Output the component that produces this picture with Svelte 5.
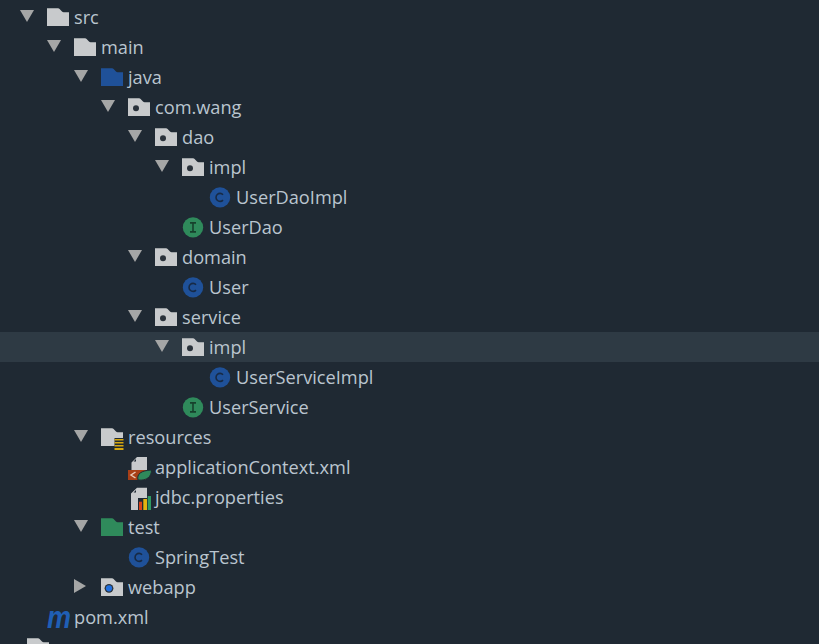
<script lang="ts">
  type Row = { name: string; depth: number; icon: string; arrow?: string; active?: boolean };

  const rows: Row[] = [
    { name: 'src', depth: 1, icon: 'folder', arrow: 'open' },
    { name: 'main', depth: 2, icon: 'folder', arrow: 'open' },
    { name: 'java', depth: 3, icon: 'source', arrow: 'open' },
    { name: 'com.wang', depth: 4, icon: 'package', arrow: 'open' },
    { name: 'dao', depth: 5, icon: 'package', arrow: 'open' },
    { name: 'impl', depth: 6, icon: 'package', arrow: 'open' },
    { name: 'UserDaoImpl', depth: 7, icon: 'class' },
    { name: 'UserDao', depth: 6, icon: 'interface' },
    { name: 'domain', depth: 5, icon: 'package', arrow: 'open' },
    { name: 'User', depth: 6, icon: 'class' },
    { name: 'service', depth: 5, icon: 'package', arrow: 'open' },
    { name: 'impl', depth: 6, icon: 'package', arrow: 'open', active: true },
    { name: 'UserServiceImpl', depth: 7, icon: 'class' },
    { name: 'UserService', depth: 6, icon: 'interface' },
    { name: 'resources', depth: 3, icon: 'resources', arrow: 'open' },
    { name: 'applicationContext.xml', depth: 4, icon: 'spring' },
    { name: 'jdbc.properties', depth: 4, icon: 'props' },
    { name: 'test', depth: 3, icon: 'test', arrow: 'open' },
    { name: 'SpringTest', depth: 4, icon: 'class' },
    { name: 'webapp', depth: 3, icon: 'web', arrow: 'closed' },
    { name: 'pom.xml', depth: 1, icon: 'maven' },
    { name: '', depth: 0, icon: 'folder' }
  ];

  const folderPath = 'M0 2.3H11Q12 2.3 12.6 3L15 5.6Q15.6 6.3 16.6 6.3H22V20H0Z';
</script>

<div class="tree">
  {#each rows as row}
    <div class="row" class:active={row.active} style="padding-left: {20 + row.depth * 27 - 27}px">
      <span class="arrow">
        {#if row.arrow === 'open'}
          <svg width="14" height="12" viewBox="0 0 14 12"><path d="M0 0H14L7 12Z" fill="#a5a6a6" /></svg>
        {:else if row.arrow === 'closed'}
          <svg width="12" height="14" viewBox="0 0 12 14"><path d="M0 0L12 7L0 14Z" fill="#a5a6a6" /></svg>
        {/if}
      </span>
      <span class="icon">
        {#if row.icon === 'folder'}
          <svg width="22" height="22" viewBox="0 0 22 22"><path d={folderPath} fill="#c8cacc" /></svg>
        {:else if row.icon === 'source'}
          <svg width="22" height="22" viewBox="0 0 22 22"><path d={folderPath} fill="#1f5199" /></svg>
        {:else if row.icon === 'test'}
          <svg width="22" height="22" viewBox="0 0 22 22"><path d={folderPath} fill="#2f8a5b" /></svg>
        {:else if row.icon === 'package'}
          <svg width="22" height="22" viewBox="0 0 22 22">
            <path d={folderPath} fill="#c8cacc" />
            <circle cx="8" cy="12.3" r="3" fill="#2a323b" />
          </svg>
        {:else if row.icon === 'web'}
          <svg width="22" height="22" viewBox="0 0 22 22">
            <path d={folderPath} fill="#c8cacc" />
            <circle cx="8" cy="12.3" r="4.4" fill="#2a323b" />
            <circle cx="8" cy="12.3" r="3.1" fill="#1f6fe0" />
          </svg>
        {:else if row.icon === 'resources'}
          <svg width="23" height="25" viewBox="0 0 23 25">
            <path d="M0 2.3H11Q12 2.3 12.6 3L15 5.6Q15.6 6.3 16.6 6.3H22V12H13.5V20H0Z" fill="#c8cacc" />
            <path d="M13.5 13H22.5V14.6H13.5ZM13.5 16H22.5V17.6H13.5ZM13.5 19H22.5V20.6H13.5ZM13.5 22H22.5V24H13.5Z" fill="#d6a70f" />
          </svg>
        {:else if row.icon === 'class'}
          <svg width="22" height="22" viewBox="0 0 22 22">
            <circle cx="11" cy="11.4" r="10.2" fill="#1f5199" />
            <path d="M14 8.7A4 4 0 1 0 14 14.1" fill="none" stroke="#172a45" stroke-width="1.6" />
          </svg>
        {:else if row.icon === 'interface'}
          <svg width="22" height="22" viewBox="0 0 22 22">
            <circle cx="11" cy="11.4" r="10.2" fill="#2f8a5b" />
            <path d="M8 6.9H14M8 15.9H14M11 6.9V15.9" fill="none" stroke="#17402c" stroke-width="1.6" />
          </svg>
        {:else if row.icon === 'spring'}
          <svg width="24" height="25" viewBox="0 0 24 25">
            <path d="M9 1H19V14H3.5V6.5ZM8 3L5.5 5.5H8Z" fill="#c8cacc" fill-rule="evenodd" />
            <path d="M0 14H18V24H0Z" fill="#a83f17" />
            <path d="M7.5 16L3 19L7.5 22" fill="none" stroke="#e8c8b8" stroke-width="1.5" />
            <path d="M10 24C8.5 18 13 14.5 23.5 14C23.5 20.5 19 25 10 24Z" fill="#2f8a5b" stroke="#1f2933" stroke-width="1" />
          </svg>
        {:else if row.icon === 'props'}
          <svg width="24" height="25" viewBox="0 0 24 25">
            <path d="M9 1.7H19V12H10V24H3V7.5ZM8 4L5.5 6.5H8Z" fill="#c8cacc" fill-rule="evenodd" />
            <path d="M11 15.7H14V24H11Z" fill="#d8431c" />
            <path d="M15.3 13H19V24H15.3Z" fill="#e3b30f" />
            <path d="M19.7 10H23V24H19.7Z" fill="#2f9a62" />
          </svg>
        {:else if row.icon === 'maven'}
          <span class="maven">m</span>
        {/if}
      </span>
      <span class="name">{row.name}</span>
    </div>
  {/each}
</div>

<style>
  :global(body) {
    background: #1f2933;
    overflow: hidden;
  }
  .tree {
    height: 644px;
    padding-top: 2px;
    box-sizing: border-box;
    overflow: hidden;
    font-family: "Open Sans", "Noto Sans", sans-serif;
    font-size: 18.2px;
    color: #bac5cf;
  }
  .row {
    display: flex;
    align-items: center;
    height: 30px;
    white-space: nowrap;
  }
  .row.active {
    background: #2e3a44;
  }
  .arrow {
    display: flex;
    width: 27px;
    flex-shrink: 0;
    margin-top: -2px;
  }
  .icon {
    display: flex;
    width: 27px;
    height: 22px;
    flex-shrink: 0;
  }
  .icon svg {
    overflow: visible;
    flex-shrink: 0;
  }
  .maven {
    font-family: "Liberation Sans", sans-serif;
    font-size: 27px;
    line-height: 18px;
    font-weight: 700;
    font-style: italic;
    color: #1f5fb5;
    margin-top: 4px;
    transform: scaleY(1.15);
    transform-origin: 0 100%;
  }
  .name {
    line-height: 30px;
  }
</style>
